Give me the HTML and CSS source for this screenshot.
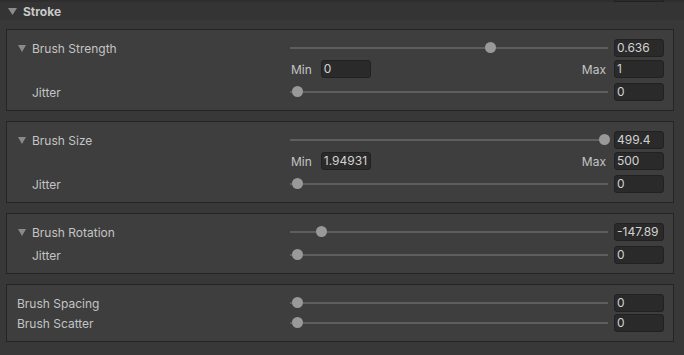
FILE: index.html
```html
<!DOCTYPE html>
<html>
<head>
<meta charset="utf-8">
<link rel="stylesheet" href="styles.css">
</head>
<body>
<div class="topstrip"><div class="stub"></div></div>
<div class="header">
  <svg class="hdr-arrow" width="9" height="7" viewBox="0 0 9 7"><path d="M0 0H9L4.5 7Z"/></svg>
  <span class="hdr-title">Stroke</span>
</div>

<div class="box">
  <div class="row">
    <div class="label"><svg class="arrow" width="8" height="7" viewBox="0 0 8 7"><path d="M0 0H8L4 7Z"/></svg>Brush Strength</div>
    <div class="slider"><div class="track"></div><div class="thumbs"><div class="thumb" style="left:63.1%"></div></div></div>
    <div class="field">0.636</div>
  </div>
  <div class="row minmax gap3">
    <div class="label"></div>
    <span class="mm">Min</span><div class="field">0</div>
    <span class="mm right">Max</span><div class="field">1</div>
  </div>
  <div class="row gap5">
    <div class="label indent">Jitter</div>
    <div class="slider"><div class="track"></div><div class="thumbs"><div class="thumb" style="left:0%"></div></div></div>
    <div class="field">0</div>
  </div>
</div>

<div class="box">
  <div class="row">
    <div class="label"><svg class="arrow" width="8" height="7" viewBox="0 0 8 7"><path d="M0 0H8L4 7Z"/></svg>Brush Size</div>
    <div class="slider"><div class="track"></div><div class="thumbs"><div class="thumb" style="left:100%"></div></div></div>
    <div class="field">499.4</div>
  </div>
  <div class="row minmax gap3">
    <div class="label"></div>
    <span class="mm">Min</span><div class="field">1.94931</div>
    <span class="mm right">Max</span><div class="field">500</div>
  </div>
  <div class="row gap5">
    <div class="label indent">Jitter</div>
    <div class="slider"><div class="track"></div><div class="thumbs"><div class="thumb" style="left:0%"></div></div></div>
    <div class="field">0</div>
  </div>
</div>

<div class="box">
  <div class="row">
    <div class="label"><svg class="arrow" width="8" height="7" viewBox="0 0 8 7"><path d="M0 0H8L4 7Z"/></svg>Brush Rotation</div>
    <div class="slider"><div class="track"></div><div class="thumbs"><div class="thumb" style="left:8%"></div></div></div>
    <div class="field">-147.89</div>
  </div>
  <div class="row gap5">
    <div class="label indent">Jitter</div>
    <div class="slider"><div class="track"></div><div class="thumbs"><div class="thumb" style="left:0%"></div></div></div>
    <div class="field">0</div>
  </div>
</div>

<div class="box">
  <div class="row">
    <div class="label">Brush Spacing</div>
    <div class="slider"><div class="track"></div><div class="thumbs"><div class="thumb" style="left:0%"></div></div></div>
    <div class="field">0</div>
  </div>
  <div class="row gap2">
    <div class="label">Brush Scatter</div>
    <div class="slider"><div class="track"></div><div class="thumbs"><div class="thumb" style="left:0%"></div></div></div>
    <div class="field">0</div>
  </div>
</div>
</body>
</html>
```

FILE: styles.css
```css
* { box-sizing: border-box; }
html, body {
  margin: 0;
  padding: 0;
  background: #383838;
  width: 684px;
  height: 355px;
  overflow: hidden;
  font-family: Inter, "Noto Sans", sans-serif;
  font-size: 12px;
  color: #c4c4c4;
}
.topstrip {
  height: 2px;
  background: #2e2e2e;
  position: relative;
  overflow: hidden;
}
.stub {
  margin-left: 614px;
  width: 50px;
  height: 2px;
  background: #2a2a2a;
  border: 1px solid #212121;
  border-top: none;
}
.header {
  height: 18px;
  background: #343434;
  display: flex;
  align-items: center;
  padding-left: 8px;
}
.hdr-arrow { fill: #8c8c8c; margin-right: 6px; }
.hdr-title { font-weight: 700; color: #c8c8c8; }
.box {
  margin: 9px 0 0 6px;
  width: 668px;
  border: 1px solid #242424;
  background: #3e3e3e;
  padding: 9px 9px 9px 10px;
}
.box + .box { margin-top: 10px; }
.row {
  display: flex;
  align-items: center;
  height: 18px;
}
.gap2 { margin-top: 2px; }
.gap3 { margin-top: 3px; }
.gap5 { margin-top: 5px; }
.label {
  width: 273px;
  flex: none;
  display: flex;
  align-items: center;
  white-space: nowrap;
}
.arrow { fill: #8a8a8a; margin-left: 1px; margin-right: 6px; }
.label.indent { padding-left: 15px; }
.slider {
  position: relative;
  width: 318px;
  height: 18px;
  flex: none;
  margin-right: 6px;
}
.track {
  position: absolute;
  left: 0;
  right: 0;
  top: 8px;
  height: 2px;
  background: #5e5e5e;
}
.thumbs {
  position: absolute;
  left: 7px;
  right: 4px;
  top: 0;
  bottom: 0;
}
.thumb {
  position: absolute;
  top: 3px;
  width: 11px;
  height: 11px;
  margin-left: -5.5px;
  border-radius: 50%;
  background: #999999;
}
.field {
  width: 50px;
  height: 18px;
  flex: none;
  background: #2a2a2a;
  border: 1px solid #212121;
  border-radius: 3px;
  color: #d2d2d2;
  padding-left: 2px;
  line-height: 16px;
  white-space: nowrap;
  overflow: hidden;
}
.mm { margin-left: 1px; margin-right: 9px; }
.mm.right { margin-left: auto; margin-right: 8px; }
```
